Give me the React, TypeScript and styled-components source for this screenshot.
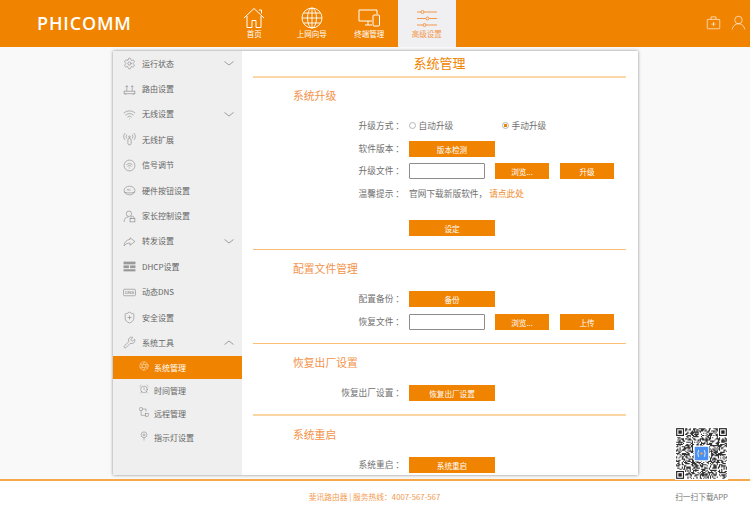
import React from "react";
import styled, { createGlobalStyle } from "styled-components";
import { Settings, Wifi, ShieldPlus, Wrench, AlarmClock, Aperture } from "lucide-react";

const ORANGE = "#f08300";
const CJK = `"Noto Sans CJK SC", "Liberation Sans", sans-serif`;

const Global = createGlobalStyle`
  html, body { margin: 0; padding: 0; background: #f9f9f9; }
  * { box-sizing: border-box; }
`;

const Page = styled.div`
  position: relative;
  width: 750px;
  height: 512px;
  overflow: hidden;
  display: flex;
  flex-direction: column;
  font-family: ${CJK};
  color: #666;
`;

const Header = styled.header`
  height: 47px;
  flex: none;
  background: ${ORANGE};
  display: flex;
  align-items: stretch;
  color: #fff;
`;

const Logo = styled.div`
  width: 225.5px;
  padding: 13px 0 0 37px;
  font: 600 18px/20px "Open Sans", "Liberation Sans", sans-serif;
  letter-spacing: 0.85px;
`;

const Nav = styled.nav`
  display: flex;
`;

const NavItem = styled.div<{ $active?: boolean }>`
  width: 57.5px;
  display: flex;
  flex-direction: column;
  align-items: center;
  justify-content: flex-end;
  padding-bottom: 9px;
  gap: 0;
  background: ${(p) => (p.$active ? "#f0f0f2" : "transparent")};
  color: ${(p) => (p.$active ? "#f3974a" : "#fff")};
  font-size: 7.5px;
  line-height: 9px;
`;

const NavGlyph = styled.svg`
  width: 24px;
  height: 22px;
  fill: none;
  stroke: currentColor;
  stroke-width: 1;
`;

const HeaderTools = styled.div`
  margin-left: auto;
  display: flex;
  align-items: flex-start;
  gap: 10px;
  padding: 15px 4px 0 0;
`;

const ToolGlyph = styled.svg`
  width: 15px;
  height: 15px;
  fill: none;
  stroke: #fff;
  stroke-width: 1;
`;

const Middle = styled.div`
  flex: 1;
  padding: 4px 112px 0 113px;
`;

const Panel = styled.div`
  height: 424px;
  display: flex;
  background: #fff;
  overflow: hidden;
  box-shadow: 0 0 3px rgba(0, 0, 0, 0.45);
`;

const Sidebar = styled.aside`
  width: 129px;
  flex: none;
  background: #efefef;
  font-size: 8px;
  color: #666;
`;

const MenuRow = styled.div`
  height: 25.4px;
  display: flex;
  align-items: center;
  padding-left: 10px;
  color: #666;
  svg.ic {
    width: 13px;
    height: 13px;
    flex: none;
    stroke-width: 1;
    color: #777;
    fill: none;
    stroke: currentColor;
  }
`;

const MenuText = styled.span`
  margin-left: 6px;
  flex: 1;
  line-height: 10px;
`;

const Caret = styled.svg<{ $up?: boolean }>`
  width: 10px;
  height: 5px;
  margin-right: 8px;
  flex: none;
  fill: none;
  stroke: #888;
  stroke-width: 0.8;
  transform: ${(p) => (p.$up ? "scaleY(-1)" : "none")};
`;

const SubRow = styled.div<{ $active?: boolean }>`
  height: 23.3px;
  display: flex;
  align-items: center;
  padding-left: 26px;
  background: ${(p) => (p.$active ? ORANGE : "transparent")};
  color: ${(p) => (p.$active ? "#fff" : "#666")};
  svg {
    width: 10px;
    height: 10px;
    margin-top: -3px;
    flex: none;
    stroke-width: 1;
    fill: none;
    stroke: currentColor;
  }
  span {
    margin-left: 5px;
  }
`;

const Main = styled.main`
  flex: 1;
  min-width: 0;
  padding: 0 12px 0 11px;
`;

const PageTitle = styled.h1`
  margin: 0;
  height: 27px;
  border-bottom: 2px solid #fbd6a6;
  font-size: 13px;
  font-weight: 400;
  line-height: 24px;
  text-align: center;
  color: ${ORANGE};
`;

const Section = styled.section<{ $pale?: boolean }>`
  padding: 8px 0 ${(p) => (p.$pale ? "9px" : "10px")} 40px;
  border-bottom: ${(p) => (p.$pale ? "2px solid #fcd5a5" : "1px solid #fbbf77")};
  &:last-child {
    border-bottom: 0;
  }
  &:first-of-type {
    padding-top: 7px;
  }
`;

const SectionTitle = styled.h2`
  margin: 0 0 10px;
  font-size: 10.8px;
  font-weight: 400;
  line-height: 20px;
  color: #f3924a;
`;

const FormRow = styled.div<{ $gapTop?: boolean }>`
  height: 22.5px;
  margin-top: ${(p) => (p.$gapTop ? "11.5px" : "0")};
  display: grid;
  grid-template-columns: 111px 1fr;
  column-gap: 5px;
  align-items: center;
  font-size: 8.7px;
`;

const Label = styled.span`
  text-align: right;
  white-space: pre;
  color: #707070;
  margin-top: -1px;
`;

const Controls = styled.div<{ $tight?: boolean }>`
  display: flex;
  align-items: center;
  gap: ${(p) => (p.$tight ? "0" : "10px")};
`;

const Button = styled.div<{ $small?: boolean }>`
  width: ${(p) => (p.$small ? "54px" : "86px")};
  height: 16px;
  background: ${ORANGE};
  color: #fff;
  font-size: 7.6px;
  line-height: 17px;
  text-align: center;
  & + & {
    margin-left: 1px;
  }
`;

const FileField = styled.div`
  width: 76px;
  height: 16px;
  background: #fff;
  border: 1px solid #8c8c8c;
  border-radius: 1px;
`;

const RadioOption = styled.label`
  width: 93px;
  display: flex;
  align-items: center;
  gap: 2.5px;
  color: #707070;
  margin-top: -1px;
`;

const RadioDot = styled.span<{ $on?: boolean }>`
  width: 7px;
  height: 7px;
  border-radius: 50%;
  border: 1px solid #b5b5b5;
  background: ${(p) => (p.$on ? `radial-gradient(circle, ${ORANGE} 0 1.6px, #fff 2px)` : "#fff")};
`;

const Tip = styled.div`
  color: #707070;
  margin-top: -1px;
`;

const TipLink = styled.span`
  color: #f08a2c;
`;

const Footer = styled.footer`
  height: 33px;
  flex: none;
  margin-top: 4px;
  background: #fff;
  border-top: 2px solid #f7a84d;
  display: grid;
  grid-template-columns: 1fr auto 1fr;
  align-items: center;
  font-size: 7.75px;
`;

const FooterCenter = styled.div`
  grid-column: 2;
  color: #f39a4f;
  margin-left: -1px;
`;

const FooterRight = styled.div`
  grid-column: 3;
  justify-self: end;
  margin-right: 22px;
  color: #777;
  font-size: 7.7px;
`;

const QrBox = styled.svg`
  position: absolute;
  left: 675px;
  top: 427px;
  width: 53px;
  height: 53px;
  background: #fff;
`;

const HomeGlyph = () => (
  <NavGlyph viewBox="0 0 24 22">
    <path d="M2 11 12 1.500 22 11M5 9v11.500h5v-7h4v7h5V9M17 3h2.500v3.500" />
  </NavGlyph>
);
const GlobeGlyph = () => (
  <NavGlyph viewBox="0 0 24 22" style={{ strokeWidth: 0.9 }}>
    <circle cx="12" cy="11" r="10" />
    <ellipse cx="12" cy="11" rx="4.500" ry="10" />
    <path d="M12 1v20M2 11h20M3.300 6h17.400M3.300 16h17.400" />
  </NavGlyph>
);
const DevicesGlyph = () => (
  <NavGlyph viewBox="0 0 24 22">
    <path d="M15 14H2V3h18v4M8 18h7M11 14v4" />
    <rect x="16" y="8" width="6.500" height="11" rx="1" />
  </NavGlyph>
);
const SlidersGlyph = () => (
  <NavGlyph viewBox="0 0 24 22">
    <path d="M2 5h4M9 5h13M2 11.500h9M14 11.500h8M2 18h6M11 18h11" />
    <circle cx="7.500" cy="5" r="1.500" />
    <circle cx="12.500" cy="11.500" r="1.500" />
    <circle cx="9.500" cy="18" r="1.500" />
  </NavGlyph>
);

const RouterIc = () => (
  <svg className="ic" viewBox="0 0 24 24">
    <rect x="2" y="15" width="20" height="5" />
    <path d="M7 15V5M17 15V5M4.500 7.500 7 5l2.500 2.500M14.500 7.500 17 5l2.500 2.500M5 22v-2M19 22v-2" />
  </svg>
);
const ExtendIc = () => (
  <svg className="ic" viewBox="0 0 24 24">
    <rect x="9" y="10" width="6" height="12" rx="3" />
    <circle cx="12" cy="7" r="1.500" />
    <path d="M7 10a6 6 0 0 1 0-7M17 10a6 6 0 0 0 0-7M4 13a10 10 0 0 1 0-13M20 13a10 10 0 0 0 0-13" />
  </svg>
);
const SignalIc = () => (
  <svg className="ic" viewBox="0 0 24 24">
    <circle cx="12" cy="12" r="10" />
    <path d="M6.500 10.500a8 8 0 0 1 11 0M8.500 13.500a5 5 0 0 1 7 0M11 16.500h2" />
  </svg>
);
const HardwareIc = () => (
  <svg className="ic" viewBox="0 0 24 24">
    <ellipse cx="12" cy="12" rx="10" ry="8" />
    <path d="M2.500 15c3 2 16 2 19 0M8 11h6M8 11l2-2" />
  </svg>
);
const ParentIc = () => (
  <svg className="ic" viewBox="0 0 24 24">
    <circle cx="11" cy="7" r="5" />
    <path d="M2 22c0-6 3-9 8-9" />
    <rect x="13" y="16" width="9" height="6" />
    <path d="M15 16v-2a2.500 2.500 0 0 1 5 0v2" />
  </svg>
);
const ForwardIc = () => (
  <svg className="ic" viewBox="0 0 24 24">
    <path d="M13 5l9 7-9 7v-4c-5 0-8 1-11 5 0-6 4-11 11-12z" />
  </svg>
);
const DhcpIc = () => (
  <svg className="ic" viewBox="0 0 24 24" style={{ fill: "#999", stroke: "none" }}>
    <rect x="1" y="3" width="22" height="5" />
    <rect x="1" y="10" width="10" height="5" />
    <rect x="13" y="10" width="10" height="5" />
    <rect x="1" y="17" width="22" height="4" />
  </svg>
);
const DnsIc = () => (
  <svg className="ic" viewBox="0 0 24 24">
    <rect x="1" y="6" width="22" height="12" rx="2" />
    <text x="12" y="15" textAnchor="middle" fontSize="8" fill="#777" stroke="none" fontFamily="Liberation Sans">DNS</text>
  </svg>
);
const RemoteIc = () => (
  <svg viewBox="0 0 24 24">
    <rect x="2" y="2" width="6" height="6" />
    <rect x="16" y="16" width="6" height="6" />
    <path d="M8 5h9v6M5 8v12h11" />
  </svg>
);
const PinIc = () => (
  <svg viewBox="0 0 24 24">
    <circle cx="12" cy="9" r="7" />
    <circle cx="12" cy="9" r="2.500" />
    <path d="M12 16v7" />
  </svg>
);

const menu: { text: string; icon: React.ReactNode; caret?: "down" | "up" }[] = [
  { text: "运行状态", icon: <Settings className="ic" />, caret: "down" },
  { text: "路由设置", icon: <RouterIc /> },
  { text: "无线设置", icon: <Wifi className="ic" />, caret: "down" },
  { text: "无线扩展", icon: <ExtendIc /> },
  { text: "信号调节", icon: <SignalIc /> },
  { text: "硬件按钮设置", icon: <HardwareIc /> },
  { text: "家长控制设置", icon: <ParentIc /> },
  { text: "转发设置", icon: <ForwardIc />, caret: "down" },
  { text: "DHCP设置", icon: <DhcpIc /> },
  { text: "动态DNS", icon: <DnsIc /> },
  { text: "安全设置", icon: <ShieldPlus className="ic" /> },
  { text: "系统工具", icon: <Wrench className="ic" />, caret: "up" },
];

const subs: { text: string; icon: React.ReactNode; active?: boolean }[] = [
  { text: "系统管理", icon: <Aperture />, active: true },
  { text: "时间管理", icon: <AlarmClock /> },
  { text: "远程管理", icon: <RemoteIc /> },
  { text: "指示灯设置", icon: <PinIc /> },
];

const QR_N = 45;
function qrCells(): string {
  let seed = 20170;
  const rnd = () => {
    seed = (seed * 1103515245 + 12345) & 0x7fffffff;
    return (seed >> 16) / 32767;
  };
  let d = "";
  const inFinder = (x: number, y: number) =>
    (x < 8 && y < 8) || (x >= QR_N - 8 && y < 8) || (x < 8 && y >= QR_N - 8);
  for (let y = 0; y < QR_N; y++) {
    for (let x = 0; x < QR_N; x++) {
      if (inFinder(x, y)) continue;
      if (rnd() > 0.5) d += `M${x} ${y}h1v1h-1z`;
    }
  }
  return d;
}
const qrPath = qrCells();

const Finder = ({ x, y }: { x: number; y: number }) => (
  <g>
    <rect x={x + 0.5} y={y + 0.5} width="6" height="6" fill="none" stroke="#222" />
    <rect x={x + 2} y={y + 2} width="3" height="3" fill="#222" />
  </g>
);

const QrCode = () => (
  <QrBox viewBox="-1 -1 47 47">
    <path d={qrPath} fill="#333" />
    <Finder x={0} y={0} />
    <Finder x={QR_N - 7} y={0} />
    <Finder x={0} y={QR_N - 7} />
    <rect x="16" y="16" width="13" height="13" rx="1" fill="#4a90f0" stroke="#fff" />
    <path d="M20 19.500q-1.500 3 0 6M25 19.500q1.500 3 0 6" stroke="#fff" strokeWidth="0.7" fill="none" />
    <circle cx="22.500" cy="22.500" r="1.100" fill="#f6a04d" />
  </QrBox>
);

export default function App() {
  return (
    <Page>
      <Global />
      <Header>
        <Logo>PHICOMM</Logo>
        <Nav>
          <NavItem><HomeGlyph />首页</NavItem>
          <NavItem><GlobeGlyph />上网向导</NavItem>
          <NavItem><DevicesGlyph />终端管理</NavItem>
          <NavItem $active><SlidersGlyph />高级设置</NavItem>
        </Nav>
        <HeaderTools>
          <ToolGlyph viewBox="0 0 24 24">
            <rect x="2" y="7" width="20" height="15" rx="1" />
            <path d="M8 7V3h8v4M12 11v7M8.500 14.500h7" />
          </ToolGlyph>
          <ToolGlyph viewBox="0 0 24 24">
            <circle cx="12" cy="8" r="6" />
            <path d="M2 23c1-6 5-9 10-9s9 3 10 9" />
          </ToolGlyph>
        </HeaderTools>
      </Header>
      <Middle>
        <Panel>
          <Sidebar>
            {menu.map((m) => (
              <MenuRow key={m.text}>
                {m.icon}
                <MenuText>{m.text}</MenuText>
                {m.caret && (
                  <Caret viewBox="0 0 10 5" $up={m.caret === "up"}>
                    <path d="M0.500 0.500 5 4 9.500 0.500" />
                  </Caret>
                )}
              </MenuRow>
            ))}
            {subs.map((s) => (
              <SubRow key={s.text} $active={s.active}>
                {s.icon}
                <span>{s.text}</span>
              </SubRow>
            ))}
          </Sidebar>
          <Main>
            <PageTitle>系统管理</PageTitle>
            <Section>
              <SectionTitle>系统升级</SectionTitle>
              <FormRow>
                <Label>升级方式 ：</Label>
                <Controls $tight>
                  <RadioOption><RadioDot />自动升级</RadioOption>
                  <RadioOption><RadioDot $on />手动升级</RadioOption>
                </Controls>
              </FormRow>
              <FormRow>
                <Label>软件版本 ：</Label>
                <Controls><Button>版本检测</Button></Controls>
              </FormRow>
              <FormRow>
                <Label>升级文件 ：</Label>
                <Controls>
                  <FileField />
                  <Button $small>浏览...</Button>
                  <Button $small>升级</Button>
                </Controls>
              </FormRow>
              <FormRow>
                <Label>温馨提示 ：</Label>
                <Tip>官网下载新版软件， <TipLink>请点此处</TipLink></Tip>
              </FormRow>
              <FormRow $gapTop>
                <span />
                <Controls><Button>设定</Button></Controls>
              </FormRow>
            </Section>
            <Section>
              <SectionTitle>配置文件管理</SectionTitle>
              <FormRow>
                <Label>配置备份 ：</Label>
                <Controls><Button>备份</Button></Controls>
              </FormRow>
              <FormRow>
                <Label>恢复文件 ：</Label>
                <Controls>
                  <FileField />
                  <Button $small>浏览...</Button>
                  <Button $small>上传</Button>
                </Controls>
              </FormRow>
            </Section>
            <Section $pale>
              <SectionTitle>恢复出厂设置</SectionTitle>
              <FormRow>
                <Label>恢复出厂设置 ：</Label>
                <Controls><Button>恢复出厂设置</Button></Controls>
              </FormRow>
            </Section>
            <Section>
              <SectionTitle>系统重启</SectionTitle>
              <FormRow>
                <Label>系统重启 ：</Label>
                <Controls><Button>系统重启</Button></Controls>
              </FormRow>
            </Section>
          </Main>
        </Panel>
      </Middle>
      <Footer>
        <FooterCenter>斐讯路由器 | 服务热线：4007-567-567</FooterCenter>
        <FooterRight>扫一扫下载APP</FooterRight>
      </Footer>
      <QrCode />
    </Page>
  );
}
